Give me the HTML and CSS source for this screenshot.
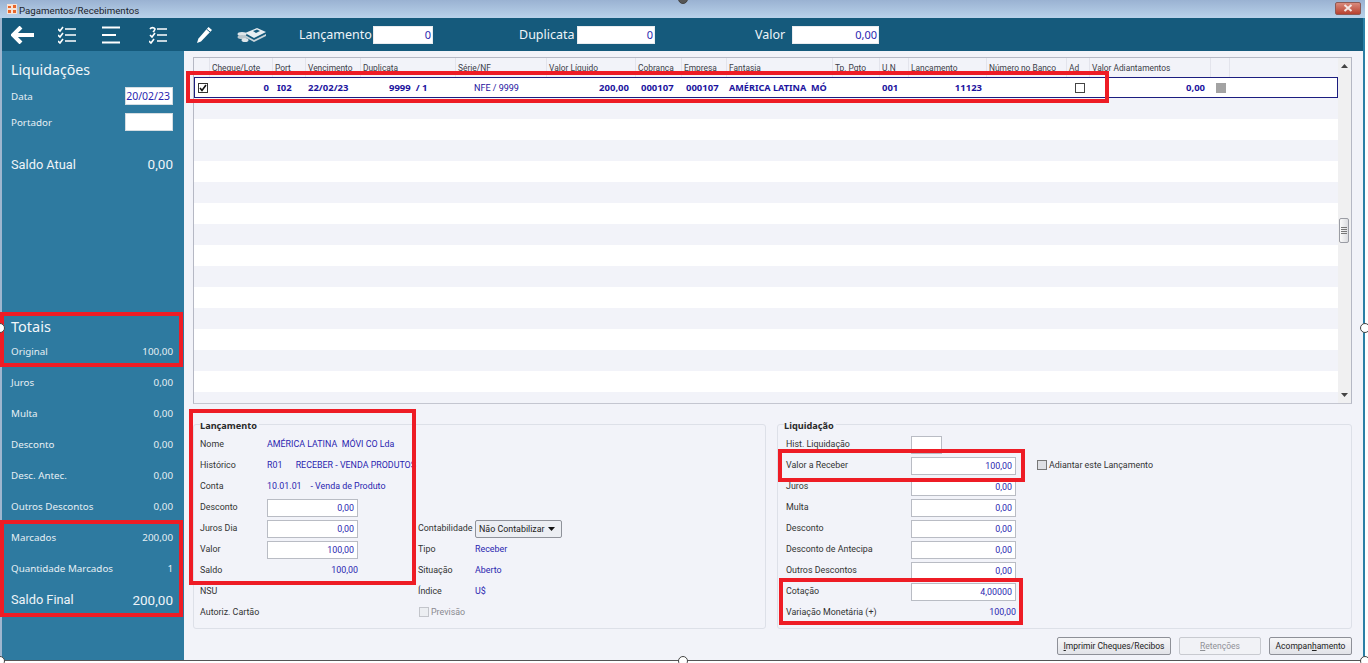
FILE: index.html
```html
<!DOCTYPE html>
<html lang="pt">
<head>
<meta charset="utf-8">
<title>Pagamentos/Recebimentos</title>
<link rel="stylesheet" href="styles.css">
</head>
<body>
<div class="screen">
  <div class="window">
    <header class="titlebar">
      <svg class="app-icon" viewBox="0 0 10 10" width="10" height="10"><rect width="10" height="10" fill="#f6e3d6"/><path d="M1 2h3v2H1zM6 1h3v3H6zM1 6h3v3H1zM6 6h3v3H6z" fill="#e8662a"/></svg>
      <span class="title">Pagamentos/Recebimentos</span>
      <span class="close"><svg viewBox="0 0 10 8" width="10" height="8"><path d="M1.5 1l7 6M8.5 1l-7 6" stroke="#f4e8e6" stroke-width="2"/></svg></span>
    </header>
    <nav class="toolbar">
      <svg class="ti ti-back" viewBox="0 0 24 18" width="24" height="18"><path d="M10 1L2 9l8 8M3 9h20" fill="none" stroke="#fff" stroke-width="4"/></svg>
      <svg class="ti ti-check" viewBox="0 0 18 18" width="18" height="18"><path d="M0 3l2 2 3-4M0 9l2 2 3-4M0 15l2 2 3-4M7 3h11M7 9h11M7 15h11" fill="none" stroke="#fff" stroke-width="1.6"/></svg>
      <svg class="ti ti-menu" viewBox="0 0 20 18" width="20" height="18"><path d="M1 1.5h18M1 9h14M1 16.500h18" fill="none" stroke="#fff" stroke-width="2"/></svg>
      <svg class="ti ti-recheck" viewBox="0 0 18 18" width="18" height="18"><path d="M1 3a3 3 0 0 1 5 0l-1 2-1 1M1 9l2 2 3-4M0 15l2 2 3-4M8 3h10M8 9h10M8 15h10" fill="none" stroke="#fff" stroke-width="1.6"/></svg>
      <svg class="ti ti-pencil" viewBox="0 0 17 18" width="17" height="18"><path d="M12.500 1l3.500 3L5 15.500 1 17l1.300-4.200z" fill="#fff"/><path d="M10.500 3l3.500 3" stroke="#155a7c"/></svg>
      <svg class="ti ti-money" viewBox="0 0 29 16" width="29" height="16"><path d="M8 6L20 1l9 4-12 6z" fill="#e8eef2"/><path d="M8 8l9 5 12-6v2L17 15 8 10z" fill="#c8d4da"/><path d="M16 4l4-1.500 3 1.500-4 2z" fill="#155a7c"/><ellipse cx="5" cy="7" rx="4.500" ry="2" fill="#dfe6ea"/><ellipse cx="5" cy="10" rx="4.500" ry="2" fill="#b9c6cd"/><ellipse cx="8" cy="13" rx="3.500" ry="2" fill="#dfe6ea"/></svg>
      <span class="tl tl-lanc">Lançamento</span><span class="field tf tf-lanc">0</span>
      <span class="tl tl-dup">Duplicata</span><span class="field tf tf-dup">0</span>
      <span class="tl tl-val">Valor</span><span class="field tf tf-val">0,00</span>
    </nav>
    <div class="body">
      <aside class="sidebar">
        <h2 class="side-h side-liq">Liquidações</h2>
        <div class="side-in in-data"><span>Data</span><span class="side-field">20/02/23</span></div>
        <div class="side-in in-port"><span>Portador</span><span class="side-field"></span></div>
        <div class="side-big saldo-atual"><span>Saldo Atual</span><span>0,00</span></div>
        <h2 class="side-h side-tot">Totais</h2>
        <div class="side-row"><span>Original</span><span>100,00</span></div>
        <div class="side-row"><span>Juros</span><span>0,00</span></div>
        <div class="side-row"><span>Multa</span><span>0,00</span></div>
        <div class="side-row"><span>Desconto</span><span>0,00</span></div>
        <div class="side-row"><span>Desc. Antec.</span><span>0,00</span></div>
        <div class="side-row"><span>Outros Descontos</span><span>0,00</span></div>
        <div class="side-row"><span>Marcados</span><span>200,00</span></div>
        <div class="side-row"><span>Quantidade Marcados</span><span>1</span></div>
        <div class="side-row side-big"><span>Saldo Final</span><span>200,00</span></div>
      </aside>
      <main class="main">
        <section class="table">
          <div class="table-body">
            <div class="cols head">
              <span></span><span>Cheque/Lote</span><span>Port</span><span>Vencimento</span><span>Duplicata</span><span>Série/NF</span><span>Valor Líquido</span><span>Cobrança</span><span>Empresa</span><span>Fantasia</span><span>Tp. Pgto</span><span>U.N</span><span>Lançamento</span><span>Número no Banco</span><span>Ad</span><span>Valor Adiantamentos</span><span></span><span></span>
            </div>
            <div class="cols row">
              <span class="cb-cell"><svg viewBox="0 0 10 10" width="10" height="10"><rect x=".5" y=".5" width="9" height="9" fill="#fff" stroke="#333"/><path d="M2 5l2 2.500L8 2" fill="none" stroke="#111" stroke-width="1.600"/></svg></span>
              <span class="r p5">0</span><span class="p3">I02</span><span class="p2">22/02/23</span><span class="pdup">9999&nbsp; / 1</span><span class="pnf">NFE / 9999</span><span class="r p8">200,00</span><span class="p4">000107</span><span class="p3">000107</span><span class="p2 fant">AMÉRICA LATINA&nbsp; MÓ</span><span></span><span class="p2">001</span><span class="r p6">11123</span><span></span><span class="cb-mid"><i class="cb"></i></span><span class="r p7">0,00</span><span class="p4"><i class="gray"></i></span><span></span>
            </div>
            <div class="stripes"></div>
          </div>
          <div class="scrollbar">
            <svg viewBox="0 0 7 4" width="7" height="4"><path d="M3.500 0L7 4H0z" fill="#444"/></svg>
            <div class="thumb"><i></i><i></i><i></i><i></i></div>
            <svg viewBox="0 0 7 4" width="7" height="4"><path d="M0 0h7L3.500 4z" fill="#444"/></svg>
          </div>
        </section>
        <section class="panels">
          <fieldset class="panel panel-l">
            <legend>Lançamento</legend>
            <div class="form form-l">
              <span>Nome</span><span class="val wide">AMÉRICA LATINA&nbsp; MÓVI CO Lda</span>
              <span>Histórico</span><span class="val wide">R01 &nbsp;&nbsp;&nbsp;&nbsp; RECEBER - VENDA PRODUTOS</span>
              <span>Conta</span><span class="val wide">10.01.01 &nbsp;&nbsp; - Venda de Produto</span>
              <span>Desconto</span><span class="field pf">0,00</span><span></span><span></span>
              <span>Juros Dia</span><span class="field pf">0,00</span><span class="down">Contabilidade</span><span class="select">Não Contabilizar<svg viewBox="0 0 7 4" width="7" height="4"><path d="M0 0h7L3.500 4z" fill="#111"/></svg></span>
              <span>Valor</span><span class="field pf">100,00</span><span class="down">Tipo</span><span class="val down">Receber</span>
              <span>Saldo</span><span class="val pr">100,00</span><span class="down">Situação</span><span class="val down">Aberto</span>
              <span>NSU</span><span></span><span>Índice</span><span class="val">U$</span>
              <span>Autoriz. Cartão</span><span></span><span class="chk-line muted"><i class="cb cb-dis"></i>Previsão</span><span></span>
            </div>
          </fieldset>
          <fieldset class="panel panel-r">
            <legend>Liquidação</legend>
            <div class="form form-r">
              <span>Hist. Liquidação</span><span class="field hist"></span><span></span>
              <span>Valor a Receber</span><span class="field pf">100,00</span><span class="chk-line"><i class="cb cb-sq"></i>Adiantar este Lançamento</span>
              <span>Juros</span><span class="field pf">0,00</span><span></span>
              <span>Multa</span><span class="field pf">0,00</span><span></span>
              <span>Desconto</span><span class="field pf">0,00</span><span></span>
              <span class="clip">Desconto de Antecipação</span><span class="field pf">0,00</span><span></span>
              <span>Outros Descontos</span><span class="field pf">0,00</span><span></span>
              <span>Cotação</span><span class="field pf">4,00000</span><span></span>
              <span>Variação Monetária (+)</span><span class="val pr">100,00</span><span></span>
            </div>
          </fieldset>
        </section>
        <footer class="buttons">
          <button class="btn b1"><u>I</u>mprimir Cheques/Recibos</button>
          <button class="btn b2" disabled><u>R</u>etenções</button>
          <button class="btn b3">Acompan<u>h</u>amento</button>
        </footer>
      </main>
    </div>
  </div>
  <i class="mark m1"></i><i class="mark m2"></i><i class="mark m3"></i><i class="mark m4"></i><i class="mark m5"></i><i class="mark m6"></i>
  <i class="handle h1"></i><i class="handle h2"></i><i class="handle h3"></i><i class="handle h4"></i><i class="handle h5"></i><i class="handle h6"></i>
</div>
</body>
</html>
```
FILE: styles.css
```css
* { box-sizing: border-box; }
html, body { margin: 0; height: 100%; background: #fff; overflow: hidden; }
body { font-family: "Noto Sans", "DejaVu Sans", sans-serif; font-size: 10px; color: #333; }
.screen { position: relative; width: 1368px; height: 663px; overflow: hidden; }
.window { width: 1365px; height: 661px; display: flex; flex-direction: column; border-left: 2px solid #9fb6cf; border-right: 2px solid #2b7fa6; border-bottom: 1px solid #555; }

.titlebar { height: 18px; margin-left: -2px; margin-right: -2px; padding: 0 4px 0 7px; display: flex; align-items: center; background: linear-gradient(#9ab2d2, #b9d2ea); }
.app-icon { flex: none; }
.title { margin-left: 2px; padding-top: 2px; font-family: Roboto, sans-serif; font-size: 9.700px; color: #20242c; }
.close { margin-left: auto; width: 26px; height: 13px; margin-top: -2px; display: flex; align-items: center; justify-content: center; background: linear-gradient(#d98a7c, #b8412f); border: 1px solid #8d5a55; border-radius: 2px; }

.toolbar { height: 33px; flex: none; display: flex; align-items: center; background: #155a7c; color: #eef4f8; }
.ti { flex: none; }
.ti-back { margin-left: 9px; }
.ti-check { margin-left: 23px; }
.ti-menu { margin-left: 25px; }
.ti-recheck { margin-left: 28px; }
.ti-pencil { margin-left: 29px; }
.ti-money { margin-left: 24px; }
.tl { font-size: 12.500px; white-space: nowrap; }
.tl-lanc { margin-left: 33px; width: 74px; }
.tl-dup { margin-left: 86px; width: 58px; }
.tl-val { margin-left: 100px; width: 37px; }
.field { display: block; height: 18px; line-height: 16px; text-align: right; background: #fff; color: #2a1fb0; padding-right: 3px; border: 1px solid #b9bcc4; }
.tf { border-color: #e9ecef; font-size: 11px; padding-right: 1px; }
.tf-lanc { width: 60px; }
.tf-dup { width: 78px; }
.tf-val { width: 87px; }

.body { flex: 1; display: flex; min-height: 0; }
.sidebar { width: 182px; flex: none; background: #2e7aa0; color: #e6eff4; padding: 10px 11px 0 9px; display: flex; flex-direction: column; font-size: 9.800px; }
.side-h { margin: 0; font-weight: 400; font-size: 14.200px; color: #f2f7fa; line-height: 18px; height: 20px; }
.side-tot { margin-top: 143px; height: 19px; line-height: 19px; font-size: 14.500px; }
.side-in { display: flex; justify-content: space-between; align-items: center; height: 18px; }
.in-data { margin-top: 6px; }
.in-port { margin-top: 8px; }
.side-field { width: 48px; height: 18px; background: #fff; color: #2a1fb0; line-height: 17px; text-align: right; padding-right: 2px; font-size: 10.500px; border: 1px solid #d5dde2; }
.side-big { display: flex; justify-content: space-between; align-items: center; font-family: Roboto, sans-serif; font-size: 13.500px; color: #eef4f8; }
.side-big span:first-child { font-size: 12.800px; }
.saldo-atual { margin-top: 23px; height: 20px; }
.side-row { display: flex; justify-content: space-between; align-items: center; height: 31px; flex: none; }

.main { flex: 1; min-width: 0; background: #f2f3f9; padding: 6px 11px 0 9px; display: flex; flex-direction: column; }
.table { height: 347px; flex: none; display: flex; border: 1px solid #b5b8c4; border-bottom-color: #c4c6d0; background: #f0f0f4; }
.table-body { width: 1144px; flex: none; display: flex; flex-direction: column; background: #f2f3f9; }
.cols { display: grid; grid-template-columns: 16px 63px 33px 55px 95px 91px 89px 46px 45px 106px 47px 29px 78px 80px 23px 121px 19px 106px; align-items: center; white-space: nowrap; }
.head { height: 19px; flex: none; font-family: Roboto, sans-serif; font-size: 8.400px; color: #3c4048; }
.head span { height: 100%; line-height: 20px; padding-left: 2px; border-right: 1px solid #e3e4ec; overflow: hidden; }
.head span:last-child { border-right: 0; }
.row { height: 21px; flex: none; background: #fff; border: 1px solid #1c1e80; color: #1c149e; font-weight: 700; font-size: 9.500px; }
.r { text-align: right; }
.p2 { padding-left: 1px; } .p3 { padding-left: 3px; } .p4 { padding-left: 4px; }
.p5 { padding-right: 5px; } .p6 { padding-right: 6px; } .p7 { padding-right: 7px; } .p8 { padding-right: 8px; }
.fant { font-size: 9.100px; }
.pdup { padding-left: 27px; }
.pnf { padding-left: 17px; font-weight: 400; font-family: Roboto, sans-serif; font-size: 9px; }
.cb-cell { display: flex; padding-left: 3px; }
.cb-mid { display: flex; justify-content: center; }
.cb { display: block; flex: none; width: 10px; height: 10px; border: 1px solid #444; background: #fff; }
.gray { display: block; width: 10px; height: 10px; background: #a3a3a3; }
.stripes { flex: 1; background: repeating-linear-gradient(#f2f3f9 0, #f2f3f9 21px, #fff 21px, #fff 42px); }
.scrollbar { flex: 1; min-width: 0; position: relative; display: flex; flex-direction: column; align-items: center; justify-content: space-between; padding: 6px 0; background: #f0f0f1; }
.thumb { position: absolute; left: 1px; right: 2px; top: 160px; height: 25px; display: flex; flex-direction: column; justify-content: center; align-items: center; gap: 1px; background: linear-gradient(90deg, #fafafa, #dcdde0); border: 1px solid #9a9ca4; border-radius: 2px; }
.thumb i { display: block; width: 6px; height: 1px; background: #777; }

.panels { margin-top: 13px; display: flex; gap: 11px; }
.panel { margin: 0; padding: 3px 0 5px 6px; border: 1px solid #dde0e8; border-radius: 3px; min-width: 0; }
.panel-l { width: 573px; flex: none; }
.panel-r { flex: 1; padding-left: 8px; }
.panel legend { padding: 0 2px 0 0; height: 14px; line-height: 17px; font-size: 9.200px; font-weight: 700; color: #2a2a2a; }
.panel-r legend { margin-left: -2px; }
.form { display: grid; grid-auto-rows: 21px; align-items: center; white-space: nowrap; font-family: Roboto, sans-serif; font-size: 8.900px; color: #333; }
.form > span:not(.field):not(.select) { padding-bottom: 2px; }
.form > .down:not(.field) { padding-bottom: 0; padding-top: 1px; }
.form-l { grid-template-columns: 67px 151px 57px 1fr; }
.form-r { grid-template-columns: 125px 105px 1fr; }
.val { color: #2a1fb0; }
.wide { grid-column: 2 / 5; }
.pr { text-align: right; }
.form-l .pf { width: 91px; }
.form-r .pf { width: 105px; }
.form-l .pr { width: 91px; }
.pf { border: 1px solid #b9bcc4; }
.hist { width: 31px; }
.clip { width: 87px; overflow: hidden; }
.select { width: 87px; height: 18px; display: flex; justify-content: space-between; align-items: center; padding: 0 6px 0 3px; background: #eceef3; border: 1px solid #8f929a; border-radius: 2px; color: #222; }
.chk-line { display: flex; align-items: center; gap: 2px; }
.form-r .chk-line { margin-left: 21px; }
.form-l .chk-line { margin-left: 1px; }
.muted { color: #8a8a90; }
.cb-dis { border-color: #c3c5cb; background: #eceef2; }
.cb-sq { border-color: #777; background: #dedfe4; }

.buttons { margin-top: 8px; display: flex; justify-content: flex-end; gap: 8px; }
.btn { height: 18px; padding: 0; font-family: Roboto, sans-serif; font-size: 8.500px; color: #222; background: linear-gradient(#f6f6f8, #e2e3e8); border: 1px solid #8e9098; border-radius: 2px; white-space: nowrap; }
.btn:disabled { color: #8f9196; background: #f1f2f6; border-color: #c8cad0; }
.b1 { width: 114px; } .b2 { width: 82px; } .b3 { width: 83px; }

.mark { position: absolute; display: block; border: 4px solid #ee1c25; pointer-events: none; }
.m1 { left: 186px; top: 71px; width: 923px; height: 32px; }
.m2 { left: 0; top: 312px; width: 183px; height: 55px; }
.m3 { left: 0; top: 520px; width: 183px; height: 97px; }
.m4 { left: 189px; top: 409px; width: 227px; height: 176px; }
.m5 { left: 778px; top: 449px; width: 247px; height: 33px; }
.m6 { left: 779px; top: 578px; width: 244px; height: 47px; }
.handle { position: absolute; display: block; width: 10px; height: 10px; border: 1.500px solid #444; border-radius: 50%; background: #fff; }
.h1 { left: -5px; top: 323px; }
.h2 { left: 678px; top: -6px; background: #555; }
.h3 { left: 1360px; top: 323px; }
.h4 { left: 678px; top: 656px; }
.h5 { left: 1360px; top: 656px; }
.h6 { left: -5px; top: 656px; }
```
